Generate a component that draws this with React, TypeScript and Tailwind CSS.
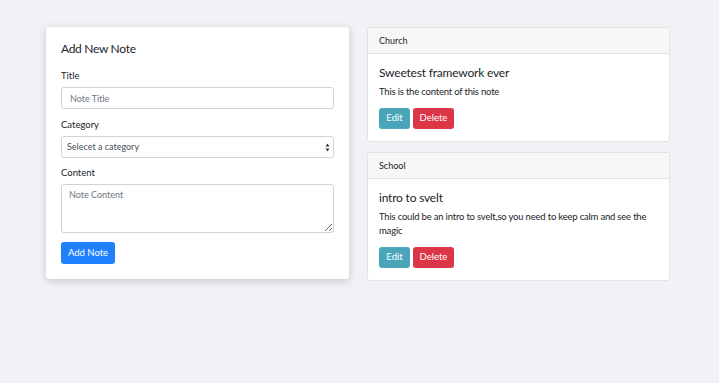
const notes = [
  {
    category: "Church",
    title: "Sweetest framework ever",
    content: "This is the content of this note",
  },
  {
    category: "School",
    title: "intro to svelt",
    content:
      "This could be an intro to svelt,so you need to keep calm and see the magic",
  },
];

const NoteCard = ({ category, title, content }: (typeof notes)[number]) => {
  return (
    <div className="bg-white border border-[#e1e3e6] rounded-[3px]">
      <div className="h-[26px] flex items-center px-[11px] bg-[#f7f7f7] border-b border-[#e1e3e6] text-[9px] text-[#212529]">
        {category}
      </div>
      <div className="px-[11px] pt-[10px] pb-[12px]">
        <h5 className="text-[12px] tracking-[-0.2px] text-[#212529] leading-[18px]">{title}</h5>
        <p className="text-[9.5px] tracking-[-0.2px] text-[#212529] leading-[14px] mt-[3px]">{content}</p>
        <div className="flex gap-[3px] mt-[9px]">
          <button className="h-[21px] w-[31px] rounded-[3px] bg-[#4aa5ba] text-white text-[9.5px]">
            Edit
          </button>
          <button className="h-[21px] w-[41px] rounded-[3px] bg-[#dc3545] text-white text-[9.5px]">
            Delete
          </button>
        </div>
      </div>
    </div>
  );
};

export default function App() {
  return (
    <div className="w-[719px] h-[383px] bg-[#f0f2f6] font-['Lato',sans-serif] text-[#212529]">
      <div className="flex gap-[18px] pl-[46px] pt-[27px]">
        <div className="w-[303px] h-[252px] bg-white rounded-[3px] shadow-[0_2px_8px_rgba(0,0,0,0.18)] px-[15px] pt-[14px]">
          <h4 className="text-[12px] tracking-[-0.3px] leading-[16px] text-[#212529]">Add New Note</h4>
          <label className="block text-[9.5px] mt-[13px] leading-[12px]">Title</label>
          <input
            className="mt-[5px] w-full h-[22px] border border-[#ced4da] rounded-[3px] px-[8px] text-[9px] placeholder:text-[#6c757d] outline-none"
            placeholder="Note Title"
          />
          <label className="block text-[9.5px] mt-[10px] leading-[12px]">Category</label>
          <div className="mt-[5px] relative w-full h-[22px] border border-[#ced4da] rounded-[3px] px-[5px] flex items-center text-[9px] text-[#495057]">
            Selecet a category
            <svg className="absolute right-[3px] top-[6px]" width="5" height="9" viewBox="0 0 5 9">
              <path d="M2.5 0.5 L4.5 3.5 H0.5 Z" fill="#333" />
              <path d="M2.5 8.5 L4.5 5.5 H0.5 Z" fill="#333" />
            </svg>
          </div>
          <label className="block text-[9.5px] mt-[9px] leading-[12px]">Content</label>
          <textarea
            className="mt-[5px] block w-full h-[49px] border border-[#ced4da] rounded-[3px] px-[7px] py-[3px] text-[9px] placeholder:text-[#6c757d] outline-none resize-y"
            placeholder="Note Content"
          />
          <button className="mt-[9px] h-[22px] w-[54px] rounded-[3px] bg-[#1e80fc] text-white text-[9.5px]">
            Add Note
          </button>
        </div>
        <div className="w-[303px] flex flex-col gap-[10px]">
          {notes.map((note) => (
            <NoteCard key={note.category} {...note} />
          ))}
        </div>
      </div>
    </div>
  );
}
